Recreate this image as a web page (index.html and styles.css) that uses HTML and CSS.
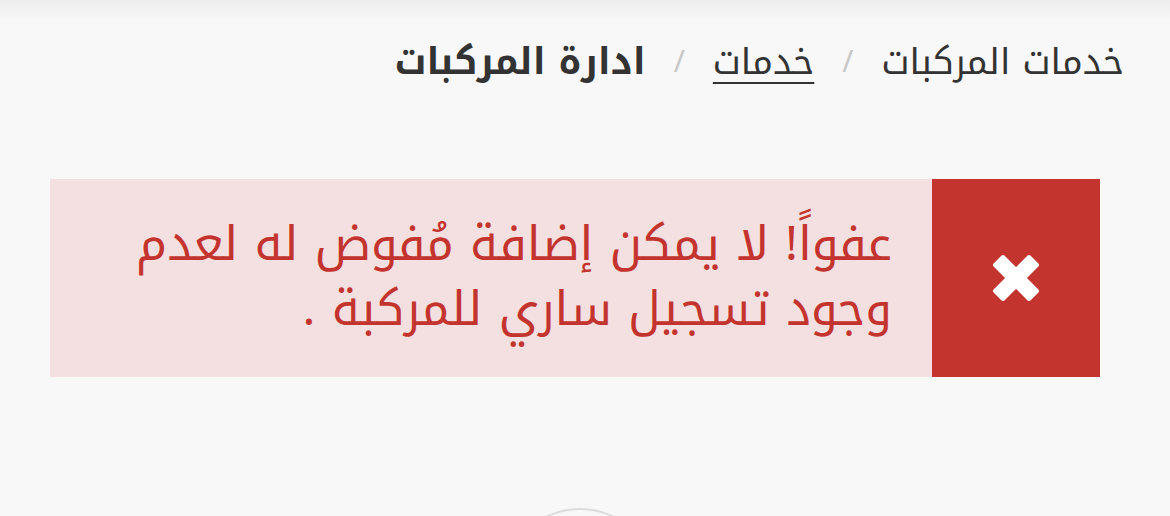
FILE: index.html
```html
<!DOCTYPE html>
<html lang="ar" dir="rtl">
<head>
<meta charset="utf-8">
<link rel="stylesheet" href="styles.css">
</head>
<body>
<div class="topshadow"></div>
<nav class="crumbs">
  <span class="crumb">خدمات المركبات</span>
  <span class="sep">/</span>
  <a class="crumb link" href="#">خدمات</a>
  <span class="sep">/</span>
  <span class="crumb current">ادارة المركبات</span>
</nav>
<div class="alert">
  <div class="alert-icon">
    <svg width="50" height="50" viewBox="0 0 50 50">
      <path d="M4 12 L12 4 L25 17 L38 4 L46 12 L33 25 L46 38 L38 46 L25 33 L12 46 L4 38 L17 25 Z" fill="#fff" stroke="#fff" stroke-width="4" stroke-linejoin="round"/>
    </svg>
  </div>
  <p class="alert-text">عفواً! لا يمكن إضافة مُفوض له لعدم وجود تسجيل ساري للمركبة .</p>
</div>
<div class="circle-wrap"><div class="circle"></div></div>
</body>
</html>
```
FILE: styles.css
```css
html, body { margin: 0; padding: 0; }
body {
  background: #f8f8f8;
  font-family: "Noto Kufi Arabic", "DejaVu Sans", sans-serif;
  width: 1170px;
  height: 516px;
  overflow: hidden;
}
.topshadow {
  height: 20px;
  background: linear-gradient(to bottom, #ececec, #f8f8f8);
}
.crumbs {
  display: flex;
  align-items: center;
  padding: 12px 46px 0 0;
  height: 60px;
  font-size: 36px;
  color: #333;
}
.crumb { color: #333; }
.link { text-decoration: underline; text-underline-offset: 8px; text-decoration-thickness: 2px; }
.current { font-weight: bold; font-size: 37px; }
.sep { color: #c8c8c8; font-size: 30px; padding: 0 28px; }
.alert {
  display: flex;
  margin: 87px 70px 0 50px;
  height: 198px;
  background: #f5e0e1;
}
.alert-icon {
  width: 168px;
  background: #c4342f;
  display: flex;
  align-items: center;
  justify-content: center;
  flex-shrink: 0;
}
.alert-text {
  margin: 0;
  padding: 33px 40px 0 40px;
  color: #c4342f;
  font-size: 48px;
  line-height: 65px;
}
.circle-wrap {
  display: flex;
  justify-content: center;
  align-items: flex-start;
  margin-top: 131px;
  height: 8px;
  overflow: hidden;
}
.circle {
  flex-shrink: 0;
  width: 150px;
  height: 150px;
  border: 2px solid #dcdcdc;
  border-radius: 50%;
  margin-right: 10px;
}
```
